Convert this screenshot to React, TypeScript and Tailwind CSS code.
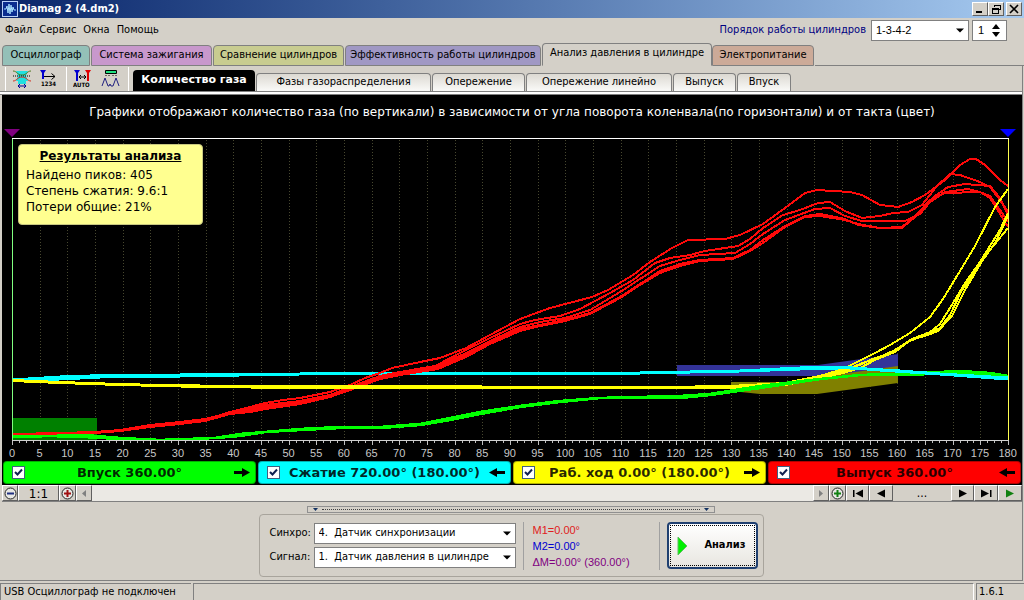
import React from 'react';

const UI = "font-['DejaVu_Sans_Condensed','DejaVu_Sans',sans-serif]";

type Point = [number, number];

const RED: Point[][] = [
  [[12,434],[60,433],[95,432],[120,430],[150,425],[180,422],[205,420],[230,412],[250,407],[265,403],[283,400],[300,398],[330,392],[350,385],[365,378],[380,373],[392,368],[420,362],[440,358],[466,348],[490,335],[520,319],[550,308],[592,297],[608,290],[633,275],[650,262],[672,248],[688,240],[725,239],[740,235],[763,224],[785,208],[805,193],[817,190],[850,192],[862,195],[880,205],[898,207],[912,202],[925,195],[945,180],[960,165],[970,159],[976,159],[985,165],[1000,180],[1008,186]],
  [[12,435],[60,434],[95,432],[120,430],[150,426],[180,423],[205,420],[230,413],[250,409],[265,405],[300,401],[330,395],[350,387],[380,376],[400,372],[435,366],[466,350],[490,338],[520,324],[535,320],[560,316],[580,309],[610,293],[633,280],[655,263],[670,258],[690,255],[705,251],[738,246],[750,239],[763,228],[783,215],[800,210],[818,203],[830,202],[845,211],[862,218],[880,216],[893,213],[908,212],[922,205],[937,186],[950,174],[960,175],[980,182],[990,187],[1000,200],[1008,212]],
  [[12,434],[60,434],[95,433],[120,430],[150,426],[180,422],[205,419],[230,413],[250,410],[265,407],[300,402],[330,396],[350,388],[380,377],[400,373],[438,366],[466,353],[490,341],[520,327],[540,322],[565,318],[590,310],[620,292],[640,279],[660,266],[680,260],[700,255],[735,253],[750,244],[763,234],[785,220],[815,209],[830,208],[845,216],[862,221],[905,221],[920,214],[935,196],[948,187],[965,184],[990,186],[1000,198],[1008,215]],
  [[12,435],[60,434],[95,433],[120,431],[150,427],[180,423],[205,421],[230,414],[250,411],[265,408],[300,403],[330,397],[350,389],[380,378],[400,374],[438,368],[466,355],[490,343],[520,329],[540,325],[565,320],[590,313],[620,297],[640,284],[660,271],[680,264],[700,260],[733,258],[750,250],[763,240],[785,226],[805,216],[820,214],[845,219],[858,225],[880,228],[902,228],[915,217],[930,202],[945,192],[968,189],[980,192],[990,198],[1000,214],[1008,227]],
  [[12,436],[60,434],[95,433],[120,431],[150,427],[180,424],[205,421],[230,414],[250,412],[265,409],[300,404],[330,397],[350,390],[380,379],[400,375],[438,369],[466,357],[490,344],[520,331],[540,326],[565,321],[590,314],[620,298],[640,285],[660,273],[680,266],[700,261],[733,259],[750,251],[763,243],[785,227],[805,217],[820,216],[845,220],[858,224],[880,228],[902,227],[915,216],[930,200],[945,193],[980,192],[990,196],[1000,210],[1008,222]],
];

const YELLOW: Point[][] = [
  [[12,380],[60,382],[120,384],[160,385],[240,386],[300,386],[660,387],[730,386],[785,383],[820,376],[843,369],[855,363],[875,353],[890,345],[910,333],[930,317],[943,299],[960,271],[975,246],[995,207],[1008,189]],
  [[12,380],[60,382],[120,385],[160,386],[240,387],[400,387],[660,388],[730,387],[785,384],[820,377],[843,371],[855,367],[870,360],[893,352],[910,341],[930,332],[940,324],[950,308],[965,283],[980,262],[1000,230],[1008,213]],
  [[12,381],[60,383],[120,385],[200,387],[300,388],[400,388],[660,388],[730,388],[785,385],[820,378],[843,373],[860,368],[875,360],[895,352],[912,339],[928,333],[940,328],[950,315],[962,290],[980,264],[995,243],[1008,216]],
  [[12,380],[120,385],[300,387],[660,388],[730,387],[785,384],[820,378],[843,371],[860,364],[880,357],[895,350],[912,339],[925,336],[938,331],[952,316],[965,290],[985,256],[1008,228]],
];

const CYAN: Point[][] = [
  [[12,380],[60,377],[120,375],[180,375],[300,374],[400,373],[640,373],[740,371],[800,368],[840,367],[880,370],[940,374],[1008,378]],
  [[12,380],[60,379],[120,376],[180,376],[300,374],[400,374],[640,373],[740,371],[800,369],[850,368],[900,371],[940,374],[1008,379]],
];

const GREEN: Point[][] = [
  [[12,436],[50,436],[85,435],[120,438],[160,440],[215,438],[240,434],[265,432],[300,429],[340,427],[380,427],[420,424],[450,418],[480,412],[520,406],[560,401],[600,398],[680,396],[710,394],[760,386],[820,379],[860,375],[900,374],[960,371],[990,373],[1008,376]],
  [[12,437],[50,436],[85,437],[120,439],[160,440],[215,438],[240,436],[265,432],[300,430],[340,428],[380,428],[420,425],[450,420],[480,414],[520,407],[560,402],[600,398],[680,398],[710,395],[760,388],[820,379],[860,375],[900,375],[960,373],[1008,377]],
];

const toPoints = (pts: Point[]) => pts.map((p) => p.join(',')).join(' ');
const xAt = (deg: number) => 12.5 + (deg * 996) / 180;
const MAJOR = Array.from({ length: 37 }, (_, i) => i * 5);
const MINOR = Array.from({ length: 145 }, (_, i) => i * 1.25);

function Curves({ data, color, width }: { data: Point[][]; color: string; width: number }) {
  return (
    <g fill="none" stroke={color} strokeWidth={width} strokeLinejoin="round">
      {data.map((pts, i) => (
        <polyline key={i} points={toPoints(pts)} />
      ))}
    </g>
  );
}

function Chart() {
  return (
    <svg viewBox="2 128 1020 318" preserveAspectRatio="none" className="block h-[318px] w-full" role="img" aria-label="Количество газа">
      <g stroke="#47472f" strokeWidth="1" strokeDasharray="1 2" shapeRendering="crispEdges">
        {MAJOR.slice(1, -1).map((d) => (
          <line key={d} x1={xAt(d)} x2={xAt(d)} y1="140" y2="440" />
        ))}
      </g>
      <rect x="13" y="418" width="84" height="22" fill="#008000" />
      <polygon points="677,365 818,365 898,354 898,376 677,376" fill="#333399" />
      <polygon points="731,382 785,382 898,366 898,383 817,394 760,394 731,391" fill="#808000" />
      <g shapeRendering="crispEdges">
        <Curves data={CYAN} color="#00ffff" width={3} />
        <Curves data={RED} color="#ff0a0a" width={2} />
        <Curves data={YELLOW} color="#ffff00" width={2} />
        <Curves data={GREEN} color="#00ff00" width={2.6} />
        <Curves data={CYAN.map((c) => c.slice(-4))} color="#00ffff" width={3} />
        <path d="M12 138.5H1009" stroke="#fff" />
        <path d="M12.5 139V440" stroke="#80ff80" />
        <path d="M1008.5 139V444" stroke="#ffff50" />
        <path d="M12 440.5H1009" stroke="#d0d0d0" />
        <g stroke="#c0c0c0">
          {MINOR.map((d) => (
            <line key={d} x1={xAt(d)} x2={xAt(d)} y1="441" y2={d % 5 === 0 ? 445 : 443} />
          ))}
        </g>
      </g>
      <path d="M4 129H20L12 137Z" fill="#800080" />
      <path d="M1000 129H1016L1008 137Z" fill="#0000ff" />
    </svg>
  );
}

const TABS = [
  { t: 'Осциллограф', c: 'w-[88px] bg-[#94c0b8]' },
  { t: 'Система зажигания', c: 'w-[121px] bg-[#c898cc]' },
  { t: 'Сравнение цилиндров', c: 'w-[131px] bg-[#c8cc90]' },
  { t: 'Эффективность работы цилиндров', c: 'w-[196px] bg-[#a098c4]' },
  { t: 'Анализ давления в цилиндре', c: 'w-[170px] bg-[#d4d0c8]', active: true },
  { t: 'Электропитание', c: 'w-[102px] bg-[#ccaa98]' },
];

const SUBTABS = [
  { t: 'Фазы газораспределения', c: 'w-[175px]' },
  { t: 'Опережение', c: 'w-[93px]' },
  { t: 'Опережение линейно', c: 'w-[146px]' },
  { t: 'Выпуск', c: 'w-[63px]' },
  { t: 'Впуск', c: 'w-[54px]' },
];

const CHANNELS = [
  { t: 'Впуск 360.00°', c: 'bg-[#00ff00]', left: false },
  { t: 'Сжатие 720.00° (180.00°)', c: 'bg-[#00ffff]', left: true },
  { t: 'Раб. ход 0.00° (180.00°)', c: 'bg-[#ffff00]', left: false },
  { t: 'Выпуск 360.00°', c: 'bg-[#ff0000]', left: true },
];

const RAISED = 'border border-t-white border-l-white border-r-[#606060] border-b-[#606060] bg-[#d4d0c8]';

function WinButton({ label, children }: { label: string; children: React.ReactNode }) {
  return (
    <button aria-label={label} className={`flex h-[14px] w-4 items-center justify-center ${RAISED}`}>
      <svg width="10" height="10" viewBox="0 0 10 10" fill="none" stroke="#000" shapeRendering="crispEdges">{children}</svg>
    </button>
  );
}

function Combo({ id, value, className }: { id: string; value: string; className: string }) {
  return (
    <div className={`relative ${className}`}>
      <select id={id} className="h-full w-full appearance-none border border-[#808080] bg-white pl-1 text-[11px] whitespace-pre text-black outline-none">
        <option>{value}</option>
      </select>
      <svg className="pointer-events-none absolute top-2 right-[5px]" width="8" height="5" viewBox="0 0 8 5">
        <path d="M0 0.5H8L4 4.5Z" />
      </svg>
    </div>
  );
}

function NavButton({ label, w, children }: { label: string; w: string; children: React.ReactNode }) {
  return (
    <button aria-label={label} className={`flex h-4 shrink-0 items-center justify-center ${w} ${RAISED}`}>
      {children}
    </button>
  );
}

function Zoomer({ color, plus }: { color: string; plus: boolean }) {
  return (
    <svg width="13" height="13" viewBox="0 0 13 13">
      <circle cx="6.5" cy="6.5" r="5.5" fill="#e8e8e4" stroke="#222" />
      <path d={plus ? 'M3 6.5H10M6.5 3V10' : 'M3 6.5H10'} stroke={color} strokeWidth="2" />
    </svg>
  );
}

function Tri({ d, color = '#000' }: { d: string; color?: string }) {
  return (
    <svg width="12" height="9" viewBox="0 0 12 9" fill={color}>
      <path d={d} />
    </svg>
  );
}

function ToolButton({ label, children }: { label: string; children: React.ReactNode }) {
  return (
    <button aria-label={label} className="flex h-5 w-5 items-center justify-center">
      <svg width="20" height="20" viewBox="0 0 20 20" fill="none">{children}</svg>
    </button>
  );
}

export default function App() {
  return (
    <div className={`flex min-h-screen w-full flex-col bg-[#d4d0c8] text-[11px] text-black ${UI}`}>
      <header className="flex h-[18px] items-center bg-gradient-to-r from-[#0a246a] to-[#a6caf0] px-[2px]">
        <svg width="16" height="16" viewBox="0 0 16 16">
          <rect x=".5" y=".5" width="15" height="15" fill="#0a2c90" stroke="#b8d0f8" />
          <path d="M2 8H4L5 5L6 12L7 3L8 13L9 4L10 11L11 6L12 9H14" fill="none" stroke="#a8e0ff" />
        </svg>
        <h1 className="ml-px grow text-[11px] font-bold text-white">Diamag 2 (4.dm2)</h1>
        <div className="flex">
          <WinButton label="Свернуть"><path d="M1 7.5H7M1 8.5H7" /></WinButton>
          <WinButton label="Восстановить"><path d="M3.5 3V1H9M3 1.5H9V5.5H7M1 4.5H7V9H1.5V4M1 5H7" /></WinButton>
          <span className="w-[2px]" />
          <WinButton label="Закрыть"><path d="M1 1L9 9M9 1L1 9" strokeWidth="1.6" shapeRendering="auto" /></WinButton>
        </div>
      </header>

      <div className="flex h-[25px] items-center pr-[17px] pl-[5px]">
        <nav className="flex grow gap-[7px]">
          <button>Файл</button>
          <button>Сервис</button>
          <button>Окна</button>
          <button>Помощь</button>
        </nav>
        <label htmlFor="order" className="mr-[5px] text-[#000080]">Порядок работы цилиндров</label>
        <Combo id="order" value="1-3-4-2" className="mr-[3px] h-[21px] w-[98px] font-['Liberation_Sans',sans-serif]" />
        <div className="flex h-[21px] w-[35px] items-center border border-[#808080] bg-white">
          <input aria-label="Цилиндр" defaultValue="1" className="w-[18px] pl-[5px] font-['Liberation_Sans',sans-serif] text-[11px] outline-none" />
          <div className="flex flex-col gap-[3px]">
            <button aria-label="Больше"><svg width="10" height="5" viewBox="0 0 10 5" className="block"><path d="M1 5L5 0L9 5Z" /></svg></button>
            <button aria-label="Меньше"><svg width="10" height="5" viewBox="0 0 10 5" className="block"><path d="M1 0L5 5L9 0Z" /></svg></button>
          </div>
        </div>
      </div>

      <div className="flex h-[23px] items-end pl-[2px]">
        {TABS.map((tab) => (
          <button
            key={tab.t}
            className={`shrink-0 rounded-t border border-[#808080] whitespace-nowrap ${tab.c} ${tab.active ? 'h-[23px] border-b-transparent pb-[2px]' : 'mr-px h-[21px]'}`}
          >
            {tab.t}
          </button>
        ))}
        <span className="grow border-b border-[#808080]" />
      </div>

      <main className="mr-px flex grow flex-col border-r border-r-[#808080]">
        <div className="flex h-[26px] items-end border-b border-[#808080] pl-[5px]">
          <div className="flex h-6 items-center gap-[8px] border-l border-white pl-[6px]">
            <ToolButton label="Синхронизация">
              <path d="M4 2H16L14 7L16 12H14V15H6V12H4L6 7Z" fill="#20e0e0" />
              <path d="M1 2C5 2 5 6 10 6S15 2 19 2" stroke="#507820" />
              <path d="M1 7H19" stroke="#000" strokeDasharray="1 1" />
              <path d="M1 12C5 12 5 8 10 8S15 12 19 12" stroke="#d03020" />
              <path d="M6 17H14M6 17L8 15M6 17L8 19M14 17L12 15M14 17L12 19" stroke="#000090" />
            </ToolButton>
            <ToolButton label="Нумерация">
              <path d="M0 1H6L4 4V10H2V4Z" fill="#0000d0" />
              <path d="M4 7.5H15M11.500 4.500L15 7.500L11.500 10.500" stroke="#000" />
              <text x="1" y="17" fontSize="6" fontWeight="bold" fill="#000">1234</text>
            </ToolButton>
          </div>
          <div className="ml-[6px] flex h-6 items-center gap-[8px] border-l border-white pl-[6px]">
            <ToolButton label="Автоматически">
              <path d="M1 1H7L5 4V12H3V4Z" fill="#0000d0" />
              <path d="M12 1H18L16 4V12H14V4Z" fill="#e00000" />
              <path d="M6 8H13M8 6L6 8L8 10M11 6L13 8L11 10" stroke="#000" />
              <text x="0" y="18" fontSize="6" fontWeight="bold" fill="#000">AUTO</text>
            </ToolButton>
            <ToolButton label="Форма сигнала">
              <path d="M4.500 1.500H15.500V4.500H4.500Z" fill="#20e080" stroke="#000" />
              <path d="M5 6V7M8 6V7M12 6V7M15 6V7" stroke="#000" />
              <path d="M1 17L4 9L7 17H8L9 15L10 17H12L15 9L18 17" stroke="#202080" />
            </ToolButton>
          </div>
          <div className="ml-[7px] flex h-6 items-end gap-px border-l border-white pl-1">
            <button className="h-[21px] w-[122px] rounded-t bg-black font-['DejaVu_Sans',sans-serif] font-bold whitespace-nowrap text-white">Количество газа</button>
            {SUBTABS.map((tab) => (
              <button key={tab.t} className={`h-[18px] shrink-0 rounded-t border border-b-0 border-[#808080] bg-gradient-to-b from-[#dcd9d2] to-[#fafaf8] whitespace-nowrap ${tab.c}`}>
                {tab.t}
              </button>
            ))}
          </div>
        </div>
        <div className="h-[3px] border-b border-[#808080] bg-white" />

        <section className="ml-[2px] bg-black font-['DejaVu_Sans',sans-serif]">
          <h2 className="flex h-[33px] items-center justify-center text-[12px] whitespace-nowrap text-white">
            Графики отображают количество газа (по вертикали) в зависимости от угла поворота коленвала(по горизонтали) и от такта (цвет)
          </h2>
          <div className="relative">
            <Chart />
            <aside className="absolute top-4 left-4 h-[81px] w-[185px] rounded border border-[#c8c880] bg-[#ffff90] px-[7px] py-[3px] text-[12px] leading-4">
              <h3 className="mb-[3px] text-center font-bold underline">Результаты анализа</h3>
              <p>Найдено пиков: 405</p>
              <p>Степень сжатия: 9.6:1</p>
              <p>Потери общие: 21%</p>
            </aside>
          </div>
          <div className="flex h-[15px] justify-between pr-[14px] pl-[10px] font-['Liberation_Sans',sans-serif] text-[11px] leading-[15px] text-[#c8c8c8]">
            {MAJOR.map((d) => (
              <span key={d} className="flex w-0 justify-center">{d}</span>
            ))}
          </div>
          <div className="grid h-6 grid-cols-4 gap-[2px] px-px pb-px">
            {CHANNELS.map((ch) => (
              <label key={ch.t} className={`relative flex items-center rounded border border-black/30 pl-2 ${ch.c}`}>
                <input type="checkbox" defaultChecked className="h-[13px] w-[13px] shrink-0 appearance-none border border-[#406080] bg-white" />
                <svg className="pointer-events-none absolute left-[10px]" width="9" height="9" viewBox="0 0 9 9">
                  <path d="M1 4L3.500 6.500L8 1.500" fill="none" stroke="#102050" strokeWidth="2" />
                </svg>
                <span className="grow text-center text-[13px] font-bold whitespace-nowrap text-black/85">{ch.t}</span>
                <svg className={`mr-[5px] shrink-0 ${ch.left ? 'rotate-180' : ''}`} width="16" height="9" viewBox="0 0 16 9">
                  <path d="M0 3H8V0L16 4.500L8 9V6H0Z" />
                </svg>
              </label>
            ))}
          </div>
        </section>

        <div className="ml-[2px] flex h-[17px] border-b border-[#808080]">
          <NavButton label="Уменьшить" w="w-4"><Zoomer color="#203080" plus={false} /></NavButton>
          <button className={`h-4 w-[41px] font-['DejaVu_Sans',sans-serif] text-[12px] leading-4 ${RAISED}`}>1:1</button>
          <NavButton label="Увеличить" w="w-[17px]"><Zoomer color="#a01010" plus /></NavButton>
          <NavButton label="Влево" w="w-4"><Tri d="M8 1L4 4.500L8 8Z" color="#808080" /></NavButton>
          <div className="grow bg-[#ebe9e4]" />
          <NavButton label="Вправо" w="w-4"><Tri d="M4 1L8 4.500L4 8Z" color="#808080" /></NavButton>
          <NavButton label="Масштаб по вертикали" w="w-[17px]"><Zoomer color="#108010" plus /></NavButton>
          <NavButton label="В начало" w="w-[23px]"><Tri d="M1 1H2.500V8H1ZM11 0.500V8.500L3.500 4.500Z" /></NavButton>
          <NavButton label="Назад" w="w-6"><Tri d="M10 0.500V8.500L2 4.500Z" /></NavButton>
          <span className="w-[58px] text-center text-[12px] leading-4">...</span>
          <NavButton label="Вперёд" w="w-[23px]"><Tri d="M2 0.500V8.500L10 4.500Z" /></NavButton>
          <NavButton label="В конец" w="w-6"><Tri d="M10 1H11.500V8H10ZM1 0.500V8.500L9 4.500Z" /></NavButton>
          <NavButton label="Пуск" w="w-6"><Tri d="M2 0.500V8.500L10 4.500Z" color="#108010" /></NavButton>
        </div>

        <div className="flex grow flex-col items-center border-b border-[#808080] pb-[3px]">
          <div className="mt-1 flex h-[7px] w-[408px] items-center gap-1 border border-[#909090] px-[5px]">
            <svg width="5" height="3" viewBox="0 0 5 3" fill="#103060"><path d="M0 0H5L2.500 3Z" /></svg>
            <span className="grow border-b border-dotted border-[#404040]" />
            <svg width="5" height="3" viewBox="0 0 5 3" fill="#103060"><path d="M0 0H5L2.500 3Z" /></svg>
          </div>
          <div className="mt-px flex h-[63px] w-[505px] items-center rounded border border-[#a8a49c] pr-[5px] pl-[10px]">
            <div className="grid grid-cols-[44px_202px] items-center gap-y-[3px]">
              <label htmlFor="sync">Синхро:</label>
              <Combo id="sync" value={'4.\u00a0\u00a0Датчик синхронизации'} className="h-[21px]" />
              <label htmlFor="signal">Сигнал:</label>
              <Combo id="signal" value={'1.\u00a0\u00a0Датчик давления в цилиндре'} className="h-[21px]" />
            </div>
            <div className="ml-[7px] flex h-12 w-[137px] flex-col border-x border-[#a0a0a0] pl-[9px] font-['Liberation_Sans',sans-serif] text-[11px] leading-4">
              <span className="text-[#e02020]">M1=0.00°</span>
              <span className="text-[#0000d0]">M2=0.00°</span>
              <span className="text-[#800080]">ΔM=0.00° (360.00°)</span>
            </div>
            <button className="ml-[7px] flex h-[47px] w-[91px] items-center rounded-sm border-2 border-[#204070] bg-gradient-to-b from-white to-[#e8e6e0] p-px">
              <span className="flex h-full w-full items-center justify-between border border-dotted border-black pr-[8px] pl-[6px]">
                <svg width="11" height="20" viewBox="0 0 11 20"><path d="M1 1L10 10L1 19Z" fill="#00f000" stroke="#60c060" /></svg>
                <b>Анализ</b>
              </span>
            </button>
          </div>
        </div>
      </main>

      <footer className="mt-[2px] flex h-[17px] gap-[2px]">
        <span className="w-[191px] border-t border-l border-[#808080] pl-[3px] leading-[15px] whitespace-nowrap">USB Осциллограф не подключен</span>
        <span className="grow border-t border-r border-l border-t-[#808080] border-r-white border-l-[#808080]" />
        <span className="w-[48px] border-t border-l border-[#808080] pl-[2px] leading-[15px]">1.6.1</span>
      </footer>
    </div>
  );
}
